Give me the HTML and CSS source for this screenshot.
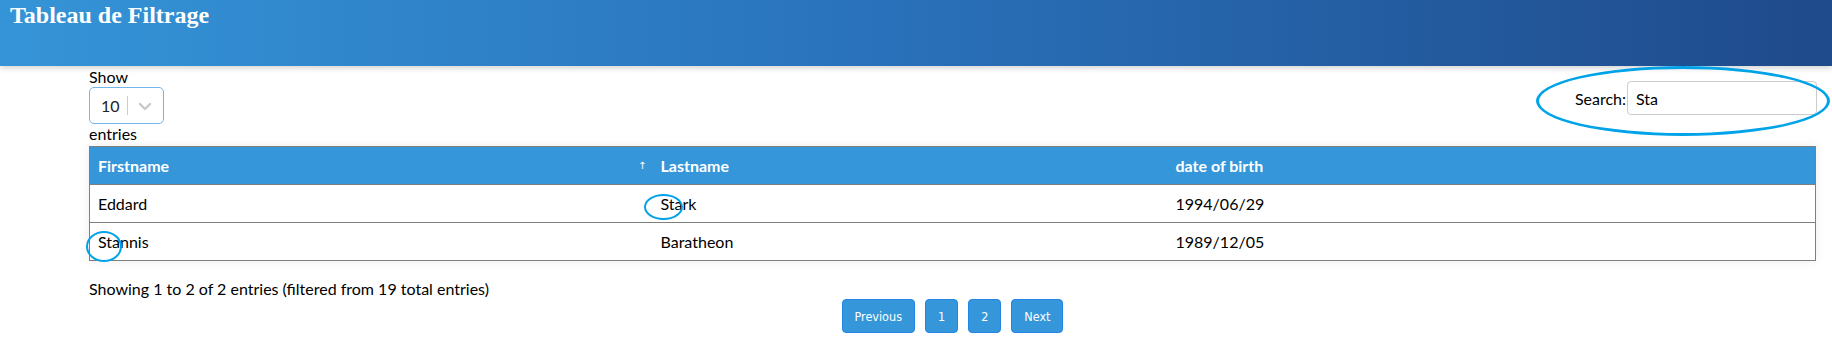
FILE: index.html
```html
<!DOCTYPE html>
<html lang="fr">
<head>
<meta charset="utf-8">
<title>Tableau de Filtrage</title>
<link rel="stylesheet" href="styles.css">
</head>
<body>
<div class="page">
  <header class="topbar">
    <h1 class="title">Tableau de Filtrage</h1>
  </header>

  <main class="content">
    <div class="controls">
      <div class="length">
        <div class="length-label">Show</div>
        <div class="select">
          <span class="select-value">10</span>
          <span class="select-sep"></span>
          <svg class="select-arrow" width="14" height="10" viewBox="0 0 14 10"><path d="M2 3 L7 8 L12 3" fill="none" stroke="#c8c8c8" stroke-width="2.4" stroke-linecap="round" stroke-linejoin="round"/></svg>
        </div>
        <div class="length-label">entries</div>
      </div>
      <label class="search">
        <span class="search-label">Search:</span>
        <span class="search-input">Sta</span>
      </label>
    </div>

    <table class="grid">
      <colgroup>
        <col class="c1">
        <col class="c2">
        <col class="c3">
      </colgroup>
      <thead>
        <tr>
          <th><span class="th-inner"><span>Firstname</span><span class="sort">↑</span></span></th>
          <th>Lastname</th>
          <th>date of birth</th>
        </tr>
      </thead>
      <tbody>
        <tr><td>Eddard</td><td>Stark</td><td>1994/06/29</td></tr>
        <tr><td>Stannis</td><td>Baratheon</td><td>1989/12/05</td></tr>
      </tbody>
    </table>

    <div class="info">Showing 1 to 2 of 2 entries (filtered from 19 total entries)</div>

    <nav class="pager">
      <button class="pbtn">Previous</button>
      <button class="pbtn">1</button>
      <button class="pbtn">2</button>
      <button class="pbtn">Next</button>
    </nav>
  </main>

  <span class="mark mark-search"></span>
  <span class="mark mark-stark"></span>
  <span class="mark mark-stannis"></span>
</div>
</body>
</html>
```
FILE: styles.css
```css
html, body {
  margin: 0;
  padding: 0;
  background: #ffffff;
}

body {
  font-family: "Lato", "Noto Sans", sans-serif;
  font-size: 16px;
  color: #000000;
}

.page {
  position: relative;
  min-height: 361px;
}

.topbar {
  height: 66px;
  box-sizing: border-box;
  padding: 2px 10px 0;
  background: linear-gradient(to right, #3594d7 0%, #2a74bd 45%, #1f4a8b 100%);
  box-shadow: 0 2px 6px rgba(0, 0, 0, 0.18);
  position: relative;
  z-index: 1;
}

.title {
  margin: 0;
  font-family: "Liberation Serif", "Times New Roman", serif;
  font-weight: 700;
  font-size: 24px;
  line-height: 27px;
  color: #ffffff;
}

.content {
  padding: 1px 16px 0 89px;
}

.controls {
  display: flex;
  justify-content: space-between;
  align-items: flex-start;
}

.length {
  display: flex;
  flex-direction: column;
  align-items: flex-start;
}

.length-label {
  line-height: 19px;
}

.select {
  margin-top: 1px;
  width: 75px;
  height: 37px;
  box-sizing: border-box;
  border: 1px solid #72b6ea;
  border-radius: 5px;
  display: flex;
  align-items: center;
  padding-left: 11px;
}

.select-value {
  font-size: 16px;
  color: #222222;
  width: 26px;
}

.select-sep {
  width: 1px;
  height: 19px;
  background: #cccccc;
}

.select-arrow {
  margin-left: 10px;
}

.search {
  display: flex;
  align-items: center;
  margin-top: 14px;
  margin-right: -1px;
}

.search-label {
  margin-right: 1px;
}

.search-input {
  width: 190px;
  height: 34px;
  box-sizing: border-box;
  border: 1px solid #cccccc;
  border-radius: 4px;
  padding: 0 8px;
  display: flex;
  align-items: center;
  color: #000000;
}

.grid {
  margin-top: 3px;
  width: 100%;
  table-layout: fixed;
  border-collapse: collapse;
  border: 1px solid #7f7f7f;
  box-shadow: 0 0 10px rgba(0, 0, 0, 0.08);
}

.c1 { width: 563px; }
.c2 { width: 515px; }

.grid th,
.grid td {
  height: 37px;
  padding: 0 8px;
  text-align: left;
  vertical-align: middle;
  border-bottom: 1px solid #7f7f7f;
}

.grid th {
  background: #3597d9;
  color: #ffffff;
  font-weight: 700;
}

.th-inner {
  display: flex;
  justify-content: space-between;
  align-items: center;
  margin-right: -2px;
}

.sort {
  font-size: 10px;
  font-weight: 400;
  font-family: "DejaVu Sans", sans-serif;
}

.info {
  margin-top: 18px;
  line-height: 19px;
}

.pager {
  margin-top: 1px;
  display: flex;
  justify-content: center;
  gap: 10px;
}

.pbtn {
  height: 34px;
  min-width: 33px;
  padding: 0 12px;
  box-sizing: border-box;
  background: #3596d9;
  border: 1px solid #2087e6;
  border-radius: 4px;
  color: #ffffff;
  font-family: "DejaVu Sans Condensed", "DejaVu Sans", sans-serif;
  font-size: 12.5px;
}

.mark {
  position: absolute;
  border: 2.5px solid #00a2e8;
  border-radius: 50%;
  box-sizing: border-box;
  z-index: 2;
  pointer-events: none;
}

.mark-search {
  left: 1536px;
  top: 66px;
  width: 294px;
  height: 70px;
  border-width: 3px;
}

.mark-stark {
  left: 644px;
  top: 194px;
  width: 39px;
  height: 26px;
}

.mark-stannis {
  left: 86px;
  top: 231px;
  width: 36px;
  height: 31px;
}
```
